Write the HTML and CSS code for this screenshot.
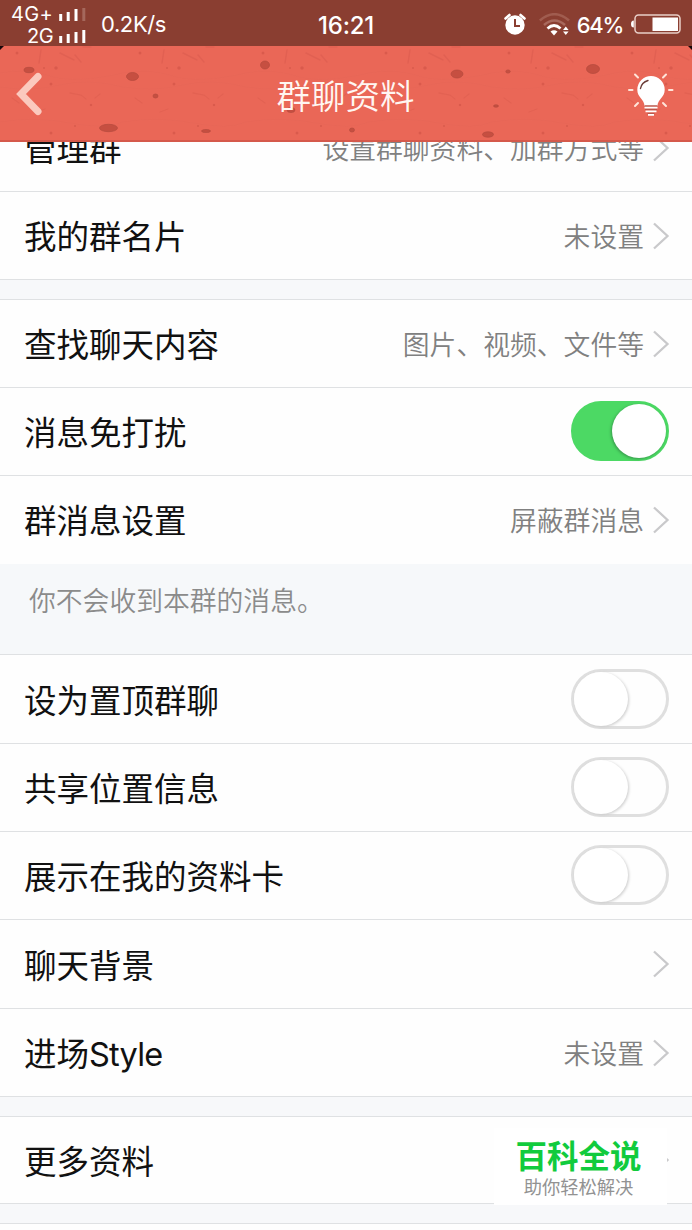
FILE: index.html
```html
<!DOCTYPE html>
<html lang="zh-CN">
<head>
<meta charset="utf-8">
<title>群聊资料</title>
<link rel="stylesheet" href="styles.css">
</head>
<body>
<svg class="defs" width="0" height="0">
  <symbol id="chev" viewBox="0 0 18 30"><path d="M2 2.5L15.5 15L2 27.5" fill="none" stroke="#c9c9cb" stroke-width="2.3"/></symbol>
</svg>
<div class="status">
  <div class="signal">
    <div class="sig"><span class="net">4G+</span><svg width="28" height="13"><path d="M1.7 6v7M9.2 4v9M17 1v12" stroke="#fff" stroke-width="3"/><path d="M24.8 0v13" stroke="#a5685c" stroke-width="3"/></svg></div>
    <div class="sig"><span>2G</span><svg width="28" height="13"><path d="M1.7 6v7M9.2 4v9M17 2v11M24.8 0v13" stroke="#fff" stroke-width="3"/></svg></div>
  </div>
  <span class="speed">0.2K/s</span>
  <span class="clock">16:21</span>
  <div class="right">
    <svg width="22" height="23" viewBox="0 0 22 23"><path d="M1.5 5.5L5.5 2M20.5 5.5L16.500 2" stroke="#fff" stroke-width="2.6" stroke-linecap="round"/><circle cx="11" cy="12" r="9.7" fill="#fff"/><path d="M11 6v7h5" fill="none" stroke="#8a3e31" stroke-width="2"/></svg>
    <svg class="wifi" width="31" height="23" viewBox="0 0 31 23"><g fill="none" stroke-width="2.6"><path d="M.8 7.500Q15.500-5 30 7.500" stroke="#a05c4f"/><path d="M5 12Q15.500 3 26 12" stroke="#a9695d"/><path d="M8.500 15.500Q15 9.500 21.500 15.500" stroke="#fff" stroke-width="2.8"/></g><path d="M11.500 18.500Q15 16 18.500 18.500L15 22.500z" fill="#fff"/><path d="M24 17l2.800-3.500L29.600 17zM24 18.600h5.600L26.800 22z" fill="#fff"/></svg>
    <span class="pct">64%</span>
    <svg class="batt" width="50" height="20" viewBox="0 0 50 20"><rect x="4" y="1" width="45" height="18" rx="3.500" fill="none" stroke="#e9cfc8" stroke-width="1.500"/><path d="M2.800 6.500Q0 6.500 0 10t2.800 3.500z" fill="#fff"/><rect x="21.500" y="3.500" width="25.500" height="13.500" fill="#fff"/></svg>
  </div>
</div>
<header class="header">
  <svg class="texture" width="692" height="96" viewBox="0 0 692 96">
    <defs>
      <pattern id="grain" width="123" height="96" patternUnits="userSpaceOnUse">
        <g fill="none" stroke="#cf5145" stroke-linecap="round">
          <path d="M60 7l6 3 8 4M75 9l6 7M41 4l-2 13M83 1l8 0" stroke-width="1.600" opacity=".3"/>
          <path d="M70 47l11 2 5 4M100 48l-5 4M45 63l-8 3M12 52l7 5" stroke-width="1.300" opacity=".28"/>
          <path d="M0 27q25-5 50 3t73-3M0 41q32 5 60-2t63 2M0 76q35-6 70 1t53-1" stroke-width=".7" opacity=".12"/>
        </g>
        <g fill="#c94e42" opacity=".5"><circle cx="56" cy="22" r="1.800"/><circle cx="51" cy="38" r="1.500"/><circle cx="91" cy="59" r="1.300"/><circle cx="51" cy="87" r="1.500"/><circle cx="75" cy="80" r="1"/><circle cx="44" cy="22" r="1"/><circle cx="17" cy="7" r="1.500"/></g>
      </pattern>
    </defs>
    <rect width="692" height="96" fill="#ea6757"/>
    <rect width="692" height="96" fill="url(#grain)"/>
    <g fill="#c64f41" stroke="#b54a3e" stroke-width=".7">
      <ellipse cx="29" cy="24" rx="5" ry="2.700"/><ellipse cx="132.500" cy="30.500" rx="6" ry="4"/><ellipse cx="155.500" cy="50" rx="2.500" ry="2"/><ellipse cx="265" cy="19" rx="4.500" ry="4"/><ellipse cx="108.500" cy="82" rx="9" ry="3.700"/><ellipse cx="206" cy="85" rx="4.500" ry="1.500"/><ellipse cx="291" cy="64" rx="4" ry="2.500"/>
      <ellipse cx="457" cy="28" rx="6" ry="4"/><ellipse cx="508" cy="25.500" rx="2.200" ry="1.600"/><ellipse cx="593" cy="23" rx="6.500" ry="4.500"/><ellipse cx="496" cy="60" rx="2.500" ry="1.200"/><ellipse cx="352" cy="84" rx="2.500" ry="2"/><ellipse cx="488" cy="88.500" rx="5.500" ry="2.700"/>
    </g>
    <path d="M0 95H692" stroke="#d5594b" stroke-width="2"/>
    <path d="M0 0h4L0 4zM692 0h-4L692 4z" fill="#17070a"/>
  </svg>
  <svg class="back" width="32" height="46" viewBox="0 0 32 46"><path d="M25 5.500L8 23L25 40.500" fill="none" stroke="#fbc9be" stroke-width="7" stroke-linejoin="miter" stroke-linecap="round"/></svg>
  <h1 class="title">群聊资料</h1>
  <svg class="bulb" width="48" height="46" viewBox="0 0 48 46">
    <path d="M8 3.500l3 3M39 3.500L36 6.500M2 19h3.500M42 19h3.500M8 35l3-3M39 35l-3-3" stroke="#ffe4d9" stroke-width="2" stroke-linecap="round"/>
    <path d="M24 5a13.700 13.700 0 0 0-13.700 13.700c0 8 7.200 9.300 7.200 16.300h13c0-7 7.200-8.300 7.200-16.300A13.700 13.700 0 0 0 24 5z" fill="#fff"/>
    <path d="M13.500 17.500q1-6 7.500-8" fill="none" stroke="#6b3d38" stroke-width="1.400" stroke-linecap="round"/>
    <path d="M17.500 35h13M18 38.500h12M20.500 42.500h7" stroke="#b9574b" stroke-width="1.300"/><path d="M17.500 36.700h13M18.500 40.300h11M21 43.800h6" stroke="#fff" stroke-width="1.800"/>
  </svg>
</header>
<main class="list">
  <div class="row clipped"><span class="label">管理群</span><span class="value">设置群聊资料、加群方式等</span><svg class="chev"><use href="#chev"/></svg></div>
  <div class="row"><span class="label">我的群名片</span><span class="value">未设置</span><svg class="chev"><use href="#chev"/></svg></div>
  <div class="gap"></div>
  <div class="row"><span class="label">查找聊天内容</span><span class="value">图片、视频、文件等</span><svg class="chev"><use href="#chev"/></svg></div>
  <div class="row"><span class="label">消息免打扰</span><span class="switch on"><i></i></span></div>
  <div class="row plain"><span class="label">群消息设置</span><span class="value">屏蔽群消息</span><svg class="chev"><use href="#chev"/></svg></div>
  <div class="note">你不会收到本群的消息。</div>
  <div class="row tall"><span class="label">设为置顶群聊</span><span class="switch"><i></i></span></div>
  <div class="row"><span class="label">共享位置信息</span><span class="switch"><i></i></span></div>
  <div class="row"><span class="label">展示在我的资料卡</span><span class="switch"><i></i></span></div>
  <div class="row tall"><span class="label">聊天背景</span><svg class="chev"><use href="#chev"/></svg></div>
  <div class="row"><span class="label">进场<span class="latin">Style</span></span><span class="value">未设置</span><svg class="chev"><use href="#chev"/></svg></div>
  <div class="gap"></div>
  <div class="row last"><span class="label">更多资料</span><svg class="chev"><use href="#chev"/></svg>
    <div class="mark"><b>百科全说</b><span>助你轻松解决</span></div>
  </div>
  <div class="gap"></div>
</main>
</body>
</html>
```

FILE: styles.css
```css
* { box-sizing: border-box; }
body {
  margin: 0;
  width: 692px;
  height: 1230px;
  overflow: hidden;
  background: #fefefe;
  color: #111;
  font-family: Inter, "Noto Sans CJK SC", sans-serif;
}
svg { display: block; flex: none; }
.defs { position: absolute; }
.status {
  display: flex;
  height: 46px;
  padding-top: 2px;
  background: #8a3e31;
  color: #fff;
  align-items: center;
  white-space: nowrap;
}
.signal { width: 101px; padding: 1px 14px 0 0; }
.sig {
  display: flex;
  justify-content: flex-end;
  align-items: center;
  gap: 6px;
  height: 22px;
  font-size: 20px;
  line-height: 22px;
  letter-spacing: -.6px;
}
.net { letter-spacing: .3px; }
.sig svg { margin-top: 1px; }
.speed { width: 217px; font-size: 22px; letter-spacing: -.4px; }
.clock { font-size: 24px; letter-spacing: -.2px; margin-top: 2px; font-weight: 500; }
.right { margin-left: auto; padding-right: 11px; display: flex; align-items: center; }
.wifi { margin-left: 13px; }
.pct { font-size: 22px; letter-spacing: -1.3px; margin: 1px 8px 0 7px; font-weight: 500; }
.batt { margin-top: -1px; }
.header {
  position: relative;
  display: flex;
  height: 96px;
  align-items: center;
  justify-content: space-between;
  padding: 0 17px 0 13px;
  z-index: 1;
}
.texture { position: absolute; inset: 0; z-index: -1; }
.title {
  margin: 6px 0 0 19px;
  font-size: 34.5px;
  line-height: 40px;
  font-weight: 350;
  color: #fff6f2;
}
.row {
  display: flex;
  position: relative;
  height: 88px;
  padding: 0 22px 0 24px;
  align-items: center;
  border-bottom: 1px solid #dfe1e3;
  background: #fefefe;
  white-space: nowrap;
}
.clipped { margin-top: -38px; }
.plain { border-bottom-color: transparent; }
.tall { height: 89px; }
.last { height: 87px; }
.label { flex: 1; font-size: 32.5px; line-height: 46px; margin-top: 5px; }
.latin { letter-spacing: -.8px; }
.value { font-size: 26.8px; line-height: 40px; color: #808080; margin: 3px 8px 0 0; font-weight: 350; }
.chev { width: 18px; height: 30px; }
.gap { height: 20px; background: #f7f8fa; border-bottom: 1px solid #dfe1e3; }
.note {
  height: 91px;
  padding: 17px 29px;
  background: #f6f8fa;
  border-bottom: 1px solid #dfe1e3;
  color: #8b8b8b;
  font-size: 26.8px;
  line-height: 40px;
  font-weight: 350;
}
.switch {
  display: flex;
  width: 98px;
  height: 60px;
  margin: -1px 1px 0 0;
  border: 3px solid #dfdfdf;
  border-radius: 30px;
}
.switch i { width: 54px; height: 54px; border-radius: 50%; background: #fff; box-shadow: 1px 1px 3px #ccc; }
.on { background: #4cd964; border-color: #4cd964; justify-content: flex-end; }
.on i { box-shadow: -1px 1px 3px #38994c; }
.mark {
  position: absolute;
  left: 494px;
  top: 11px;
  width: 173px;
  height: 77px;
  padding-right: 4px;
  background: #fff;
  text-align: center;
}
.mark b { display: block; font-size: 31.5px; line-height: 40px; margin-top: 9px; color: #11cb3d; font-weight: 700; }
.mark span { display: block; font-size: 18.3px; line-height: 20px; color: #929292; }
```
